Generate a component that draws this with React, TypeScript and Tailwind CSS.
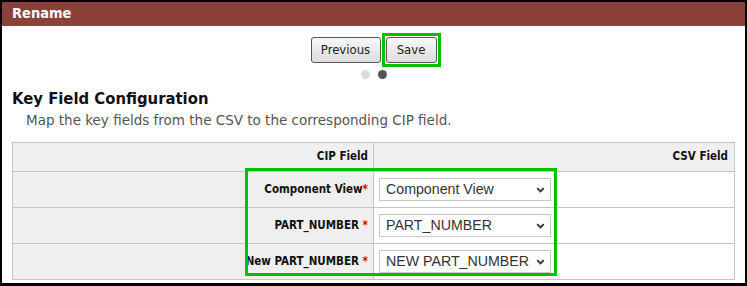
const rows = [
  { label: "Component View", gap: false, value: "Component View" },
  { label: "PART_NUMBER", gap: true, value: "PART_NUMBER" },
  { label: "New PART_NUMBER", gap: true, value: "NEW PART_NUMBER" },
];

function Chevron() {
  return (
    <svg width="9" height="6" viewBox="0 0 9 6" className="shrink-0">
      <path d="M1.2 1.2 L4.5 4.5 L7.8 1.2" fill="none" stroke="#333" strokeWidth="1.9" />
    </svg>
  );
}

export default function App() {
  return (
    <div className="h-[286px] w-[747px] bg-black pl-[2px] pt-[2px] font-['DejaVu_Sans_Condensed','DejaVu_Sans',sans-serif]">
      <div className="h-[281px] w-[743px] bg-white">
        <div className="flex h-[24px] items-center bg-[#8b403a] px-[10px] text-[14.5px] font-bold text-white">Rename</div>

        <div className="flex justify-center pt-[11px]">
          <div className="flex items-center gap-[5px]">
            <button className="h-[26px] w-[70px] rounded-[3px] border border-[#555] bg-gradient-to-b from-[#f8f8f8] to-[#dcdcdc] text-[13px] text-[#222]">
              Previous
            </button>
            <div className="-m-[4px] border-[3px] border-[#00c000] p-px">
              <button className="block h-[26px] w-[51px] rounded-[3px] border border-[#555] bg-gradient-to-b from-[#f8f8f8] to-[#dcdcdc] text-[13px] text-[#222]">
                Save
              </button>
            </div>
          </div>
        </div>
        <div className="mt-[7px] flex justify-center gap-[8px]">
          <span className="h-[9px] w-[9px] rounded-full bg-[#dcdcdc]" />
          <span className="h-[9px] w-[9px] rounded-full bg-[#555]" />
        </div>

        <h2 className="mt-[9px] pl-[10px] text-[16.5px] font-bold leading-[22px] text-[#111]">Key Field Configuration</h2>
        <p className="pl-[24px] pt-[2px] font-['DejaVu_Sans',sans-serif] text-[13.5px] leading-[16px] text-[#555]">
          Map the key fields from the CSV to the corresponding CIP field.
        </p>

        <div className="relative ml-[10px] mt-[14px] w-[723px]">
          <table className="w-full border-collapse text-[11.5px] text-[#111]">
            <thead>
              <tr className="h-[29px] bg-[#efefef]">
                <th className="w-[361px] border border-[#c4c4c4] pr-[5px] text-right font-bold">CIP Field</th>
                <th className="border border-[#c4c4c4] pr-[6px] text-right font-bold">CSV Field</th>
              </tr>
            </thead>
            <tbody>
              {rows.map((r) => (
                <tr key={r.label} className="h-[36px]">
                  <td className="border border-[#c4c4c4] bg-[#efefef] pr-[5px] text-right font-bold">
                    {r.label}
                    {r.gap ? " " : ""}
                    <span className="text-[#e00000]">*</span>
                  </td>
                  <td className="border border-[#c4c4c4] pl-[5px]">
                    <div className="flex h-[23px] w-[172px] items-center justify-between border border-[#c8c8c8] bg-white pl-[6px] pr-[5px] font-['Liberation_Sans',Arial,sans-serif] text-[14.2px] text-[#333]">
                      <span className="whitespace-nowrap">{r.value}</span>
                      <Chevron />
                    </div>
                  </td>
                </tr>
              ))}
            </tbody>
          </table>
          <div className="pointer-events-none absolute left-[233px] top-[26px] h-[108px] w-[312px] border-[3px] border-[#00c000]" />
        </div>
      </div>
    </div>
  );
}
